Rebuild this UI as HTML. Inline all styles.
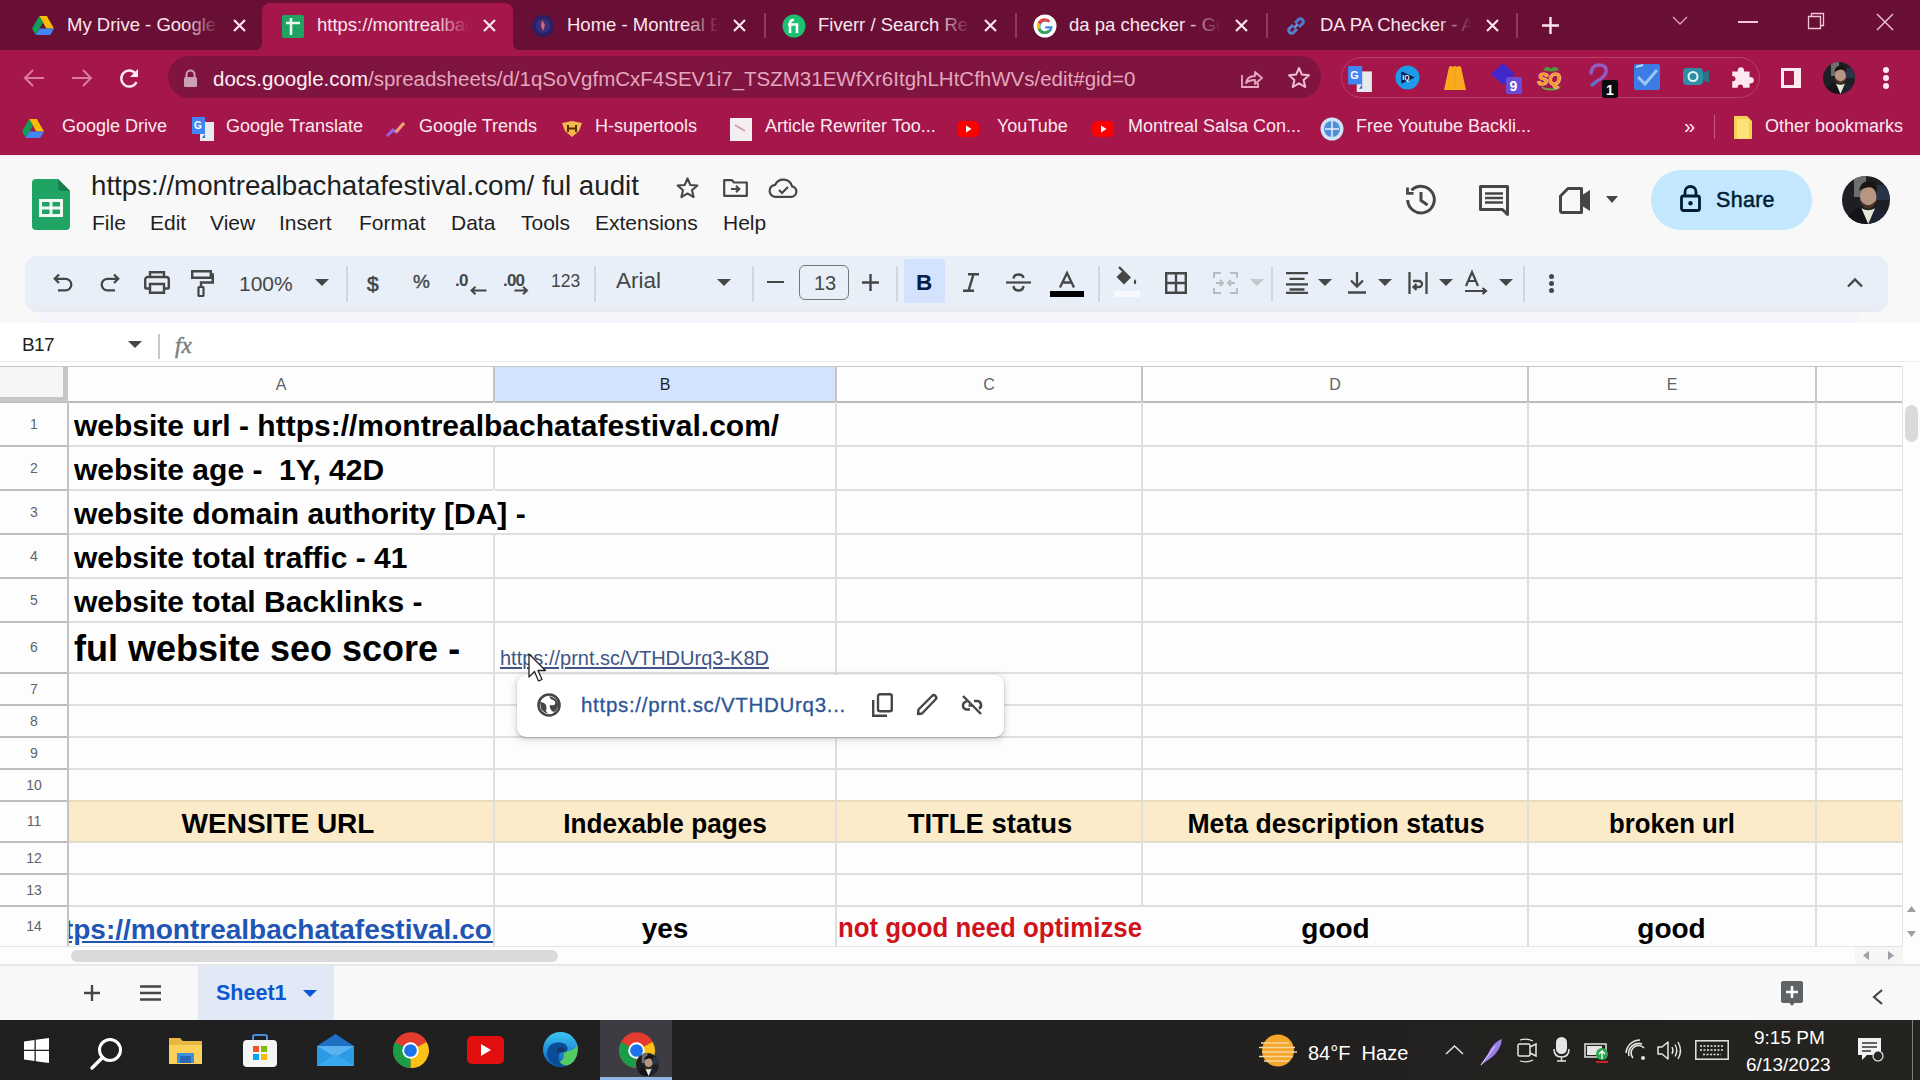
<!DOCTYPE html>
<html><head><meta charset="utf-8"><style>
*{margin:0;padding:0;box-sizing:border-box}
html,body{width:1920px;height:1080px;overflow:hidden;background:#fff;font-family:"Liberation Sans",sans-serif}
.a{position:absolute}
svg.i{position:absolute;overflow:visible}
.t{position:absolute;white-space:nowrap;line-height:1}
</style></head><body>
<div class="a" style="left:0;top:0;width:1920px;height:50px;background:#690e34"></div>
<div class="a" style="left:0;top:50px;width:1920px;height:105px;background:#a5164b"></div>
<svg class="i" style="left:252px;top:0" width="272" height="52"><path d="M0 51 Q10 51 10 42 L10 12 Q10 3 19 3 L252 3 Q261 3 261 12 L261 42 Q261 51 271 51 Z" fill="#a5164b"/></svg>
<div class="a" style="left:764px;top:13px;width:2px;height:25px;background:#8c3a5d"></div>
<div class="a" style="left:1015px;top:13px;width:2px;height:25px;background:#8c3a5d"></div>
<div class="a" style="left:1266px;top:13px;width:2px;height:25px;background:#8c3a5d"></div>
<div class="a" style="left:1516px;top:13px;width:2px;height:25px;background:#8c3a5d"></div>
<svg class="i" style="left:31px;top:14px" width="24" height="24" viewBox="0 0 24 24"><path d="M8.2 2 H15.8 L23 14.5 H15.4 Z" fill="#fbbc04"/><path d="M8.2 2 L1 14.5 L4.8 21 L12 8.5 Z" fill="#0f9d58"/><path d="M4.8 21 H19.2 L23 14.5 H8.6 Z" fill="#4285f4"/></svg>
<div class="a" style="left:67px;top:10px;width:158px;height:30px;overflow:hidden">
<div class="t" style="left:0;top:6.3px;font-size:18.5px;color:#fbe6ee">My Drive - Google Drive</div>
<div class="a" style="right:0;top:0;width:40px;height:30px;background:linear-gradient(to right,rgba(0,0,0,0),#690e34 85%)"></div>
</div>
<svg class="i" style="left:233px;top:19px" width="13" height="13"><path d="M1 1 L12 12 M12 1 L1 12" stroke="#fbe6ee" stroke-width="2.2"/></svg>
<svg class="i" style="left:281px;top:14px" width="24" height="24" viewBox="0 0 24 24"><rect x="1" y="1" width="22" height="23" rx="2" fill="#1ea362"/><path d="M5 9 H19 M10 4 V21" stroke="#e8f5ec" stroke-width="2.6"/></svg>
<div class="a" style="left:317px;top:10px;width:158px;height:30px;overflow:hidden">
<div class="t" style="left:0;top:6.3px;font-size:18.5px;color:#fbe6ee">https://montrealbachatafestival.com</div>
<div class="a" style="right:0;top:0;width:40px;height:30px;background:linear-gradient(to right,rgba(0,0,0,0),#a5164b 85%)"></div>
</div>
<svg class="i" style="left:483px;top:19px" width="13" height="13"><path d="M1 1 L12 12 M12 1 L1 12" stroke="#fbe6ee" stroke-width="2.2"/></svg>
<svg class="i" style="left:531px;top:14px" width="24" height="24" viewBox="0 0 24 24"><circle cx="12" cy="12" r="11" fill="#2c1f63"/><circle cx="12" cy="12" r="7" fill="#3a2f78"/><path d="M11 6 L14 11 L12 17 L10 12 Z" fill="#d46a7a"/></svg>
<div class="a" style="left:567px;top:10px;width:158px;height:30px;overflow:hidden">
<div class="t" style="left:0;top:6.3px;font-size:18.5px;color:#fbe6ee">Home - Montreal Bachata</div>
<div class="a" style="right:0;top:0;width:40px;height:30px;background:linear-gradient(to right,rgba(0,0,0,0),#690e34 85%)"></div>
</div>
<svg class="i" style="left:733px;top:19px" width="13" height="13"><path d="M1 1 L12 12 M12 1 L1 12" stroke="#fbe6ee" stroke-width="2.2"/></svg>
<svg class="i" style="left:782px;top:14px" width="24" height="24" viewBox="0 0 24 24"><circle cx="12" cy="12" r="11.5" fill="#1dbf73"/><path d="M8 19 V10 M6 10.5 H15 V19 M8 10 Q8 5.5 12 6" stroke="#fff" stroke-width="2.6" fill="none"/></svg>
<div class="a" style="left:818px;top:10px;width:158px;height:30px;overflow:hidden">
<div class="t" style="left:0;top:6.3px;font-size:18.5px;color:#fbe6ee">Fiverr / Search Results</div>
<div class="a" style="right:0;top:0;width:40px;height:30px;background:linear-gradient(to right,rgba(0,0,0,0),#690e34 85%)"></div>
</div>
<svg class="i" style="left:984px;top:19px" width="13" height="13"><path d="M1 1 L12 12 M12 1 L1 12" stroke="#fbe6ee" stroke-width="2.2"/></svg>
<svg class="i" style="left:1033px;top:14px" width="24" height="24" viewBox="0 0 24 24"><circle cx="12" cy="12" r="11.5" fill="#fff"/><path d="M19.6 12.2 H12.2 V14.6 H16.9 A5 5 0 1 1 15.3 8.6 L17.1 6.8 A7.6 7.6 0 1 0 19.6 12.2 Z" fill="#4285f4"/><path d="M4.6 8.5 A7.6 7.6 0 0 1 17.1 6.8 L15.3 8.6 A5 5 0 0 0 7.2 9.9 Z" fill="#ea4335"/><path d="M4.6 8.5 L7.2 9.9 A5 5 0 0 0 7.3 14.3 L4.7 15.7 A7.6 7.6 0 0 1 4.6 8.5 Z" fill="#fbbc05"/><path d="M4.7 15.7 L7.3 14.3 A5 5 0 0 0 15.5 15.6 L17.5 17.3 A7.6 7.6 0 0 1 4.7 15.7 Z" fill="#34a853"/></svg>
<div class="a" style="left:1069px;top:10px;width:158px;height:30px;overflow:hidden">
<div class="t" style="left:0;top:6.3px;font-size:18.5px;color:#fbe6ee">da pa checker - Google</div>
<div class="a" style="right:0;top:0;width:40px;height:30px;background:linear-gradient(to right,rgba(0,0,0,0),#690e34 85%)"></div>
</div>
<svg class="i" style="left:1235px;top:19px" width="13" height="13"><path d="M1 1 L12 12 M12 1 L1 12" stroke="#fbe6ee" stroke-width="2.2"/></svg>
<svg class="i" style="left:1284px;top:14px" width="24" height="24" viewBox="0 0 24 24"><path d="M10 14 L14 10" stroke="#6a8fd6" stroke-width="2.5"/><path d="M9 11 L5 15 A3 3 0 0 0 9 19 L13 15" stroke="#5b7fd0" stroke-width="3" fill="none"/><path d="M11 9 L15 5 A3 3 0 0 1 19 9 L15 13" stroke="#4f79cf" stroke-width="3" fill="none"/></svg>
<div class="a" style="left:1320px;top:10px;width:158px;height:30px;overflow:hidden">
<div class="t" style="left:0;top:6.3px;font-size:18.5px;color:#fbe6ee">DA PA Checker - All</div>
<div class="a" style="right:0;top:0;width:40px;height:30px;background:linear-gradient(to right,rgba(0,0,0,0),#690e34 85%)"></div>
</div>
<svg class="i" style="left:1486px;top:19px" width="13" height="13"><path d="M1 1 L12 12 M12 1 L1 12" stroke="#fbe6ee" stroke-width="2.2"/></svg>
<svg class="i" style="left:1541px;top:16px" width="19" height="19"><path d="M9.5 1 V18 M1 9.5 H18" stroke="#fbe6ee" stroke-width="2.4"/></svg>
<svg class="i" style="left:1672px;top:16px" width="16" height="10"><path d="M1 1 L8 8 L15 1" stroke="#e9a0bd" stroke-width="1.3" fill="none"/></svg>
<div class="a" style="left:1738px;top:21px;width:20px;height:1.5px;background:#f2c6d6"></div>
<svg class="i" style="left:1808px;top:13px" width="16" height="16"><path d="M0.5 3.5 H12.5 V15.5 H0.5 Z M3.5 3.5 V0.5 H15.5 V12.5 H12.5" stroke="#f2c6d6" stroke-width="1.3" fill="none"/></svg>
<svg class="i" style="left:1876px;top:13px" width="18" height="18"><path d="M1 1 L17 17 M17 1 L1 17" stroke="#f2c6d6" stroke-width="1.4"/></svg>
<svg class="i" style="left:23px;top:68px" width="22" height="20"><path d="M21 10 H3 M10 2 L2 10 L10 18" stroke="#dc7ba0" stroke-width="2" fill="none"/></svg>
<svg class="i" style="left:71px;top:68px" width="22" height="20"><path d="M1 10 H19 M12 2 L20 10 L12 18" stroke="#dc7ba0" stroke-width="2" fill="none"/></svg>
<svg class="i" style="left:118px;top:67px" width="24" height="24"><path d="M18.5 15 A8 8 0 1 1 17.5 6.5" stroke="#fde9f0" stroke-width="2.4" fill="none"/><path d="M20 2 V10 H12 Z" fill="#fde9f0"/></svg>
<div class="a" style="left:168px;top:56px;width:1153px;height:42px;border-radius:21px;background:#7f1440"></div>
<svg class="i" style="left:183px;top:69px" width="15" height="18"><path d="M3.5 8 V5.5 A4 4 0 0 1 11.5 5.5 V8" stroke="#caa0b2" stroke-width="2" fill="none"/><rect x="1" y="8" width="13" height="10" rx="1.5" fill="#caa0b2"/></svg>
<div class="t" style="left:213px;top:68.6px;font-size:20.5px;color:#fdeef3">docs.google.com<span style="color:#e3a7bd">/spreadsheets/d/1qSoVgfmCxF4SEV1i7_TSZM31EWfXr6ItghLHtCfhWVs/edit#gid=0</span></div>
<svg class="i" style="left:1240px;top:67px" width="24" height="22"><path d="M2 8 V20 H18 V16" stroke="#e9a6c0" stroke-width="1.8" fill="none"/><path d="M6 16 Q7 9 15 9 V5 L22 11 L15 17 V13 Q9 13 6 16 Z" stroke="#e9a6c0" stroke-width="1.8" fill="none" stroke-linejoin="round"/></svg>
<svg class="i" style="left:1287px;top:66px" width="24" height="24"><path d="M12 2 L14.9 8.6 L22 9.3 L16.6 14 L18.2 21 L12 17.3 L5.8 21 L7.4 14 L2 9.3 L9.1 8.6 Z" stroke="#f0c0d2" stroke-width="2" fill="none" stroke-linejoin="round"/></svg>
<div class="a" style="left:1341px;top:57px;width:419px;height:41px;border-radius:21px;border:1.5px solid #b8406a"></div>
<svg class="i" style="left:1347px;top:66px" width="26" height="26" viewBox="0 0 24 24"><rect x="9" y="5" width="14" height="19" fill="#e8eaed"/><rect x="1" y="0" width="13" height="17" fill="#4285f4"/><text x="3" y="12" font-size="10" font-weight="bold" fill="#fff" font-family="Liberation Sans">G</text><path d="M14 17 L11 21 H14 Z" fill="#3367d6"/></svg>
<svg class="i" style="left:1395px;top:65px" width="25" height="25" viewBox="0 0 24 24"><circle cx="12" cy="12" r="11.5" fill="#1e9be8"/><path d="M6 6 L19 12 L6 18 Z" fill="#0b1f4d"/><text x="7" y="14.5" font-size="6.5" font-weight="bold" fill="#fff" font-family="Liberation Sans">IQ</text></svg>
<svg class="i" style="left:1443px;top:64px" width="24" height="27" viewBox="0 0 24 27"><path d="M6 3 Q8 1 10 3 Q12 1 14 3 Q16 1 18 3 L23 26 H1 Z" fill="#fbaa1f"/><path d="M12 3 V26" stroke="#f59e0b" stroke-width="1"/></svg>
<svg class="i" style="left:1489px;top:62px" width="36" height="34" viewBox="0 0 36 34"><path d="M14 1 L26 12 L14 23 L2 12 Z" fill="#4127c9"/><rect x="17" y="15" width="16" height="17" rx="2" fill="#6a4cd8"/><text x="20.5" y="29" font-size="14" font-weight="bold" fill="#fff" font-family="Liberation Sans">9</text></svg>
<svg class="i" style="left:1535px;top:64px" width="32" height="28" viewBox="0 0 32 28"><path d="M8 6 Q12 0 16 5 Q20 0 24 6 Q16 9 8 6 Z" fill="#4e9a3a"/><path d="M6 22 Q16 27 26 22 L24 25 Q16 28 8 25 Z" fill="#6aa640"/><text x="2.5" y="21" font-size="16" font-weight="bold" font-style="italic" fill="#f39a1e" stroke="#fbd9b0" stroke-width="1.1" paint-order="stroke" font-family="Liberation Sans">SQ</text></svg>
<svg class="i" style="left:1585px;top:62px" width="40" height="38" viewBox="0 0 40 38"><path d="M6 11 Q7 3 14 3 Q22 3 21 10 Q20 15 12 19" stroke="#8f5fc5" stroke-width="3.5" fill="none" stroke-linecap="round"/><path d="M12 19 L6 24" stroke="#5b74cc" stroke-width="3.5"/><rect x="17" y="18" width="16" height="18" rx="2" fill="#0c0c0c"/><text x="21" y="33" font-size="14" font-weight="bold" fill="#fff" font-family="Liberation Sans">1</text></svg>
<svg class="i" style="left:1633px;top:63px" width="28" height="28" viewBox="0 0 28 28"><rect x="1" y="1" width="26" height="26" rx="2" fill="#3c7be3"/><path d="M5 14 L12 21 L24 7" stroke="#9cc7f7" stroke-width="3" fill="none"/><path d="M3 4 L10 2" stroke="#b7d6ff" stroke-width="2"/></svg>
<svg class="i" style="left:1682px;top:65px" width="28" height="24" viewBox="0 0 28 24"><rect x="1" y="3" width="20" height="17" rx="4" fill="#2d8fa5"/><circle cx="11" cy="11.5" r="4.5" fill="none" stroke="#e6f5f8" stroke-width="2"/><path d="M21 8 L27 5 V18 L21 15 Z" fill="#2a7388"/></svg>
<svg class="i" style="left:1729px;top:64px" width="26" height="26" viewBox="0 0 24 24"><path d="M3 7 H8 Q8 3 11 3 Q14 3 14 7 H19 V12 Q23 12 23 15 Q23 18 19 18 V22 H13 Q13 19 10.5 19 Q8 19 8 22 H3 V16 Q6 16 6 13.5 Q6 11 3 11 Z" fill="#fde9f0"/></svg>
<svg class="i" style="left:1779px;top:66px" width="24" height="24"><rect x="2" y="2" width="20" height="20" fill="#fde9f0"/><rect x="5" y="5" width="10" height="14" fill="#a5164b"/></svg>
<svg class="i" style="left:1823px;top:62px" width="32" height="32" viewBox="0 0 32 32"><defs><clipPath id="avc1823"><circle cx="16" cy="16" r="16"/></clipPath></defs><g clip-path="url(#avc1823)"><rect width="32" height="32" fill="#1e1f22"/><rect x="8" y="0" width="8" height="14" fill="#6b6f70"/><rect x="23" y="6" width="9" height="10" fill="#2a3448"/><ellipse cx="17.5" cy="14" rx="5.5" ry="7" fill="#b89580"/><path d="M11.5 10 Q12 3.5 18 3.5 Q24 4 23.5 10 Q21 7 17.5 7.5 Q14 8 11.5 10 Z" fill="#1a1512"/><path d="M12.5 16 Q13 21 17.5 22 Q22 21 22.5 16 Q21 19 17.5 19.5 Q14 19 12.5 16 Z" fill="#4a3026"/><path d="M2 32 Q5 22 12 21 L17.5 32 Z" fill="#141418"/><path d="M33 32 Q30 22 23 21 L17.5 32 Z" fill="#1d2235"/><path d="M13 21.5 L17.5 32 L22 21.5 Q17.5 24 13 21.5 Z" fill="#e8e6d6"/></g></svg>
<div class="a" style="left:1883px;top:67px;width:6px;height:6px;border-radius:3px;background:#fde9f0"></div>
<div class="a" style="left:1883px;top:75px;width:6px;height:6px;border-radius:3px;background:#fde9f0"></div>
<div class="a" style="left:1883px;top:83px;width:6px;height:6px;border-radius:3px;background:#fde9f0"></div>
<svg class="i" style="left:21px;top:117px" width="24" height="24" viewBox="0 0 24 24"><path d="M8.2 2 H15.8 L23 14.5 H15.4 Z" fill="#fbbc04"/><path d="M8.2 2 L1 14.5 L4.8 21 L12 8.5 Z" fill="#0f9d58"/><path d="M4.8 21 H19.2 L23 14.5 H8.6 Z" fill="#4285f4"/></svg>
<div class="t" style="left:62px;top:116.8px;font-size:18px;color:#fbe8ef">Google Drive</div>
<svg class="i" style="left:191px;top:117px" width="24" height="24" viewBox="0 0 24 24"><rect x="9" y="5" width="14" height="19" fill="#e8eaed"/><rect x="1" y="0" width="13" height="17" fill="#4285f4"/><text x="3" y="12" font-size="10" font-weight="bold" fill="#fff" font-family="Liberation Sans">G</text><path d="M14 17 L11 21 H14 Z" fill="#3367d6"/></svg>
<div class="t" style="left:226px;top:116.8px;font-size:18px;color:#fbe8ef">Google Translate</div>
<svg class="i" style="left:384px;top:117px" width="24" height="24" viewBox="0 0 24 24"><path d="M3 19 L9 13 L12 15 L20 6" stroke="#9b5de5" stroke-width="3" fill="none"/><path d="M12 15 L20 6" stroke="#f4a261" stroke-width="3"/></svg>
<div class="t" style="left:419px;top:116.8px;font-size:18px;color:#fbe8ef">Google Trends</div>
<svg class="i" style="left:560px;top:117px" width="24" height="24" viewBox="0 0 24 24"><path d="M2 6 L12 4 L22 6 L19 14 L12 20 L5 14 Z" fill="#f2b84b"/><path d="M8 8 V15 M16 8 V15 M8 11.5 H16" stroke="#5a2a00" stroke-width="2"/></svg>
<div class="t" style="left:595px;top:116.8px;font-size:18px;color:#fbe8ef">H-supertools</div>
<svg class="i" style="left:729px;top:117px" width="24" height="24" viewBox="0 0 24 24"><rect x="1" y="1" width="22" height="23" fill="#f3eef0"/><path d="M6 8 L16 14" stroke="#c9a0aa" stroke-width="2"/></svg>
<div class="t" style="left:765px;top:116.8px;font-size:18px;color:#fbe8ef">Article Rewriter Too...</div>
<svg class="i" style="left:956px;top:117px" width="24" height="24" viewBox="0 0 24 24"><rect x="1" y="4" width="22" height="16" rx="5" fill="#f00"/><path d="M10 8.5 L15.5 12 L10 15.5 Z" fill="#fff"/></svg>
<div class="t" style="left:997px;top:116.8px;font-size:18px;color:#fbe8ef">YouTube</div>
<svg class="i" style="left:1091px;top:117px" width="24" height="24" viewBox="0 0 24 24"><rect x="1" y="4" width="22" height="16" rx="5" fill="#f00"/><path d="M10 8.5 L15.5 12 L10 15.5 Z" fill="#fff"/></svg>
<div class="t" style="left:1128px;top:116.8px;font-size:18px;color:#fbe8ef">Montreal Salsa Con...</div>
<svg class="i" style="left:1320px;top:117px" width="24" height="24" viewBox="0 0 24 24"><circle cx="12" cy="12" r="11.5" fill="#cfe3f7"/><circle cx="12" cy="12" r="8" fill="#4f8ed8"/><path d="M5 12 H19 M12 4 V20" stroke="#e6f0fb" stroke-width="1.5"/></svg>
<div class="t" style="left:1356px;top:116.8px;font-size:18px;color:#fbe8ef">Free Youtube Backli...</div>
<div class="t" style="left:1684px;top:116.1px;font-size:20px;color:#fbe8ef">&raquo;</div>
<div class="a" style="left:1714px;top:115px;width:1px;height:24px;background:#c8557f"></div>
<svg class="i" style="left:1732px;top:115px" width="22" height="25"><path d="M2 1 H15 L20 6 V24 H2 Z" fill="#f6cf55"/><path d="M5 4 H17 V24 H5 Z" fill="#fde27a"/></svg>
<div class="t" style="left:1765px;top:116.8px;font-size:18px;color:#fbe8ef">Other bookmarks</div>
<div class="a" style="left:0;top:155px;width:1920px;height:168px;background:#f8f8f9"></div>
<div class="a" style="left:0;top:155px;width:1920px;height:3px;background:#fbeef4"></div>
<div class="a" style="left:0;top:323px;width:1920px;height:43px;background:#fff"></div>
<svg class="i" style="left:32px;top:179px" width="38" height="51" viewBox="0 0 38 51"><path d="M4 0 H26 L38 12 V47 A4 4 0 0 1 34 51 H4 A4 4 0 0 1 0 47 V4 A4 4 0 0 1 4 0 Z" fill="#1fa463"/><path d="M26 0 L38 12 H30 A4 4 0 0 1 26 8 Z" fill="#167f4c"/><rect x="7" y="20" width="24" height="18" fill="#f1f8f4"/><rect x="10" y="23" width="7.5" height="4.5" fill="#1fa463"/><rect x="20.5" y="23" width="7.5" height="4.5" fill="#1fa463"/><rect x="10" y="30.5" width="7.5" height="4.5" fill="#1fa463"/><rect x="20.5" y="30.5" width="7.5" height="4.5" fill="#1fa463"/></svg>
<div class="t" style="left:91px;top:171.6px;font-size:27.7px;color:#1f1f1f">https://montrealbachatafestival.com/ ful audit</div>
<svg class="i" style="left:676px;top:177px" width="23" height="22" viewBox="0 0 24 23"><path d="M12 1.5 L14.9 8.3 L22.3 8.9 L16.7 13.8 L18.4 21 L12 17.2 L5.6 21 L7.3 13.8 L1.7 8.9 L9.1 8.3 Z" stroke="#444746" stroke-width="2.2" fill="none" stroke-linejoin="round"/></svg>
<svg class="i" style="left:723px;top:179px" width="25" height="18" viewBox="0 0 25 18"><path d="M1.2 1.2 H9 L11 3.5 H23.8 V16.8 H1.2 Z" stroke="#444746" stroke-width="2.2" fill="none" stroke-linejoin="round"/><path d="M8 10 H16 M13 6.8 L16.3 10 L13 13.2" stroke="#444746" stroke-width="2" fill="none"/></svg>
<svg class="i" style="left:769px;top:178px" width="29" height="20" viewBox="0 0 29 20"><path d="M7 18.8 H22.5 A5.3 5.3 0 0 0 23 8.3 A9 9 0 0 0 6.2 6.8 A6 6 0 0 0 7 18.8 Z" stroke="#444746" stroke-width="2.2" fill="none"/><path d="M10 12 L13 15 L19 9" stroke="#444746" stroke-width="2.2" fill="none"/></svg>
<div class="t" style="left:92px;top:212.2px;font-size:21px;color:#1f1f1f">File</div>
<div class="t" style="left:150px;top:212.2px;font-size:21px;color:#1f1f1f">Edit</div>
<div class="t" style="left:210px;top:212.2px;font-size:21px;color:#1f1f1f">View</div>
<div class="t" style="left:279px;top:212.2px;font-size:21px;color:#1f1f1f">Insert</div>
<div class="t" style="left:359px;top:212.2px;font-size:21px;color:#1f1f1f">Format</div>
<div class="t" style="left:451px;top:212.2px;font-size:21px;color:#1f1f1f">Data</div>
<div class="t" style="left:521px;top:212.2px;font-size:21px;color:#1f1f1f">Tools</div>
<div class="t" style="left:595px;top:212.2px;font-size:21px;color:#1f1f1f">Extensions</div>
<div class="t" style="left:723px;top:212.2px;font-size:21px;color:#1f1f1f">Help</div>
<svg class="i" style="left:1405px;top:184px" width="32" height="32" viewBox="0 0 32 32"><path d="M6.5 6.3 A13.3 13.3 0 1 1 2.7 16" stroke="#444746" stroke-width="3" fill="none"/><path d="M2.5 3.5 V9.3 H8.5" stroke="#444746" stroke-width="2.8" fill="none"/><path d="M16 8 V16.5 L22.5 21" stroke="#444746" stroke-width="3" fill="none"/></svg>
<svg class="i" style="left:1479px;top:185px" width="31" height="31" viewBox="0 0 31 31"><path d="M1.5 1.5 H28.5 V29.5 L23.5 24.5 H1.5 Z" stroke="#444746" stroke-width="3" fill="none" stroke-linejoin="round"/><path d="M6 8.5 H24 M6 13 H24 M6 17.5 H24" stroke="#444746" stroke-width="2.6"/></svg>
<svg class="i" style="left:1559px;top:187px" width="33" height="27" viewBox="0 0 33 27"><path d="M9 1.5 H22.5 V25.5 H3.5 A2 2 0 0 1 1.5 23.5 V9 Z" stroke="#444746" stroke-width="3" fill="none" stroke-linejoin="round"/><path d="M22.5 8.5 L31 3 V24 L22.5 18.5 Z" fill="#444746"/></svg>
<svg class="i" style="left:1606px;top:196px" width="12" height="7"><path d="M0 0 H12 L6 7 Z" fill="#444746"/></svg>
<div class="a" style="left:1651px;top:170px;width:161px;height:60px;border-radius:30px;background:#c2e7ff"></div>
<svg class="i" style="left:1680px;top:185px" width="21" height="27" viewBox="0 0 21 27"><path d="M5 11 V7 A5.5 5.5 0 0 1 16 7 V11" stroke="#001d35" stroke-width="2.8" fill="none"/><rect x="1.5" y="11" width="18" height="14.5" rx="2" stroke="#001d35" stroke-width="2.8" fill="none"/><circle cx="10.5" cy="18.3" r="2.2" fill="#001d35"/></svg>
<div class="t" style="left:1716px;top:189.7px;font-size:21.5px;color:#001d35;-webkit-text-stroke:0.5px #001d35;letter-spacing:0.3px">Share</div>
<svg class="i" style="left:1842px;top:176px" width="48" height="48" viewBox="0 0 32 32"><defs><clipPath id="avc1842"><circle cx="16" cy="16" r="16"/></clipPath></defs><g clip-path="url(#avc1842)"><rect width="32" height="32" fill="#1e1f22"/><rect x="8" y="0" width="8" height="14" fill="#6b6f70"/><rect x="23" y="6" width="9" height="10" fill="#2a3448"/><ellipse cx="17.5" cy="14" rx="5.5" ry="7" fill="#b89580"/><path d="M11.5 10 Q12 3.5 18 3.5 Q24 4 23.5 10 Q21 7 17.5 7.5 Q14 8 11.5 10 Z" fill="#1a1512"/><path d="M12.5 16 Q13 21 17.5 22 Q22 21 22.5 16 Q21 19 17.5 19.5 Q14 19 12.5 16 Z" fill="#4a3026"/><path d="M2 32 Q5 22 12 21 L17.5 32 Z" fill="#141418"/><path d="M33 32 Q30 22 23 21 L17.5 32 Z" fill="#1d2235"/><path d="M13 21.5 L17.5 32 L22 21.5 Q17.5 24 13 21.5 Z" fill="#e8e6d6"/></g></svg>
<div class="a" style="left:25px;top:256px;width:1863px;height:56px;border-radius:12px;background:linear-gradient(to bottom,#e9eff8 0,#e9eff8 84%,#ebe9f4 100%)"></div>
<div class="a" style="left:40px;top:312px;width:1820px;height:11px;background:#f6f5fb"></div>
<svg class="i" style="left:53px;top:273px" width="20" height="19" viewBox="0 0 20 19"><path d="M6 1.5 L1.8 5.8 L6 10 M2 5.8 H12.5 A5.8 5.8 0 0 1 12.5 17.4 H5" stroke="#444746" stroke-width="2.3" fill="none"/></svg>
<svg class="i" style="left:100px;top:273px" width="20" height="19" viewBox="0 0 20 19"><path d="M14 1.5 L18.2 5.8 L14 10 M18 5.8 H7.5 A5.8 5.8 0 0 0 7.5 17.4 H15" stroke="#444746" stroke-width="2.3" fill="none"/></svg>
<svg class="i" style="left:144px;top:271px" width="26" height="23" viewBox="0 0 26 23"><path d="M6 6 V1.2 H20 V6" stroke="#444746" stroke-width="2.4" fill="none"/><path d="M6 17.5 H2 A1 1 0 0 1 1.2 16.5 V8.5 A2.5 2.5 0 0 1 3.7 6 H22.3 A2.5 2.5 0 0 1 24.8 8.5 V16.5 A1 1 0 0 1 24 17.5 H20" stroke="#444746" stroke-width="2.4" fill="none"/><path d="M6 13 H20 V21.8 H6 Z" stroke="#444746" stroke-width="2.4" fill="none"/></svg>
<svg class="i" style="left:191px;top:270px" width="23" height="27" viewBox="0 0 23 27"><path d="M1.2 1.2 H19.8 V7.8 H1.2 Z M19.8 4.5 H21.8 V12.5 H10 V17" stroke="#444746" stroke-width="2.4" fill="none"/><rect x="7.5" y="17" width="5" height="9" rx="0.5" stroke="#444746" stroke-width="2.2" fill="none"/></svg>
<div class="t" style="left:239px;top:273.2px;font-size:21px;color:#444746">100%</div>
<svg class="i" style="left:315px;top:279px" width="14" height="7"><path d="M0 0 H14 L7 7 Z" fill="#444746"/></svg>
<div class="a" style="left:346px;top:266px;width:1.5px;height:36px;background:#d3d5d9"></div>
<div class="a" style="left:594px;top:266px;width:1.5px;height:36px;background:#d3d5d9"></div>
<div class="a" style="left:752px;top:266px;width:1.5px;height:36px;background:#d3d5d9"></div>
<div class="a" style="left:896px;top:266px;width:1.5px;height:36px;background:#d3d5d9"></div>
<div class="a" style="left:1098px;top:266px;width:1.5px;height:36px;background:#d3d5d9"></div>
<div class="a" style="left:1271px;top:266px;width:1.5px;height:36px;background:#d3d5d9"></div>
<div class="a" style="left:1523px;top:266px;width:1.5px;height:36px;background:#d3d5d9"></div>
<div class="t" style="left:367px;top:273.2px;font-size:21px;color:#444746;-webkit-text-stroke:0.6px #444746">$</div>
<div class="t" style="left:413px;top:271.9px;font-size:19px;color:#444746;-webkit-text-stroke:0.4px #444746">%</div>
<div class="t" style="left:455px;top:271.6px;font-size:17px;color:#444746;font-weight:bold;letter-spacing:-0.8px">.0</div>
<svg class="i" style="left:469px;top:286px" width="18" height="9"><path d="M17.5 4.5 H2.5 M6.5 0.8 L2.5 4.5 L6.5 8.2" stroke="#444746" stroke-width="2" fill="none"/></svg>
<div class="t" style="left:503px;top:271.6px;font-size:17px;color:#444746;font-weight:bold;letter-spacing:-0.8px">.00</div>
<svg class="i" style="left:514px;top:286px" width="15" height="9"><path d="M0.5 4.5 H13 M9 0.8 L13 4.5 L9 8.2" stroke="#444746" stroke-width="2" fill="none"/></svg>
<div class="t" style="left:551px;top:273.2px;font-size:17.5px;color:#444746">123</div>
<div class="t" style="left:616px;top:270.0px;font-size:22.5px;color:#444746">Arial</div>
<svg class="i" style="left:717px;top:279px" width="14" height="7"><path d="M0 0 H14 L7 7 Z" fill="#444746"/></svg>
<div class="a" style="left:767px;top:281px;width:17px;height:2.4px;background:#444746"></div>
<div class="a" style="left:799px;top:265px;width:50px;height:35px;border-radius:6px;border:1.6px solid #747775"></div>
<div class="t" style="left:814px;top:272.6px;font-size:20px;color:#444746">13</div>
<svg class="i" style="left:862px;top:274px" width="17" height="17"><path d="M8.5 0 V17 M0 8.5 H17" stroke="#444746" stroke-width="2.4"/></svg>
<div class="a" style="left:904px;top:259px;width:41px;height:44px;border-radius:2px;background:#d3e3fd"></div>
<div class="t" style="left:916px;top:271.5px;font-size:22.5px;color:#041e49;font-weight:bold">B</div>
<svg class="i" style="left:962px;top:273px" width="18" height="19"><path d="M6 1.2 H17 M1 17.8 H12 M11.5 1.2 L6.5 17.8" stroke="#444746" stroke-width="2.4" fill="none"/></svg>
<svg class="i" style="left:1005px;top:273px" width="27" height="19"><path d="M1 9.5 H26" stroke="#444746" stroke-width="2.2"/><path d="M8.5 5.5 Q9 1.5 13.5 1.5 Q18 1.5 18.5 5" stroke="#444746" stroke-width="2.4" fill="none"/><path d="M8.5 13 Q9 17.5 13.5 17.5 Q18 17.5 18.5 13" stroke="#444746" stroke-width="2.4" fill="none"/></svg>
<svg class="i" style="left:1059px;top:272px" width="16" height="16"><path d="M1 15.5 L8 1 L15 15.5 M3.5 10.5 H12.5" stroke="#444746" stroke-width="2.3" fill="none"/></svg>
<div class="a" style="left:1050px;top:291px;width:34px;height:6px;background:#000"></div>
<svg class="i" style="left:1114px;top:266px" width="24" height="22" viewBox="0 0 24 22"><path d="M5 1 L9 5" stroke="#444746" stroke-width="2.4"/><path d="M9.5 4 L17 11.5 L10 18.5 L2.5 11 Z" fill="#444746"/><path d="M21 13 Q23.5 16.5 21 18.5 Q18.5 16.5 21 13 Z" fill="#444746"/></svg>
<div class="a" style="left:1114px;top:291px;width:26px;height:6px;background:#f7f9fc"></div>
<svg class="i" style="left:1165px;top:272px" width="22" height="22"><path d="M1.2 1.2 H20.8 V20.8 H1.2 Z M11 1 V21 M1 11 H21" stroke="#444746" stroke-width="2.4" fill="none"/></svg>
<svg class="i" style="left:1213px;top:272px" width="25" height="22"><path d="M1 6 V1 H8 M17 1 H24 V6 M1 16 V21 H8 M17 21 H24 V16" stroke="#b8bcc2" stroke-width="2" fill="none"/><path d="M3 11 H10 M7 8 L10 11 L7 14 M22 11 H15 M18 8 L15 11 L18 14" stroke="#b8bcc2" stroke-width="2" fill="none"/></svg>
<svg class="i" style="left:1250px;top:279px" width="14" height="7"><path d="M0 0 H14 L7 7 Z" fill="#c4c7cc"/></svg>
<svg class="i" style="left:1286px;top:272px" width="22" height="22"><path d="M0 1.2 H22 M3.5 6.8 H18.5 M0 12.4 H22 M3.5 17.5 H18.5 M0 20.8 H22" stroke="#444746" stroke-width="2.3"/></svg>
<svg class="i" style="left:1318px;top:279px" width="14" height="7"><path d="M0 0 H14 L7 7 Z" fill="#444746"/></svg>
<svg class="i" style="left:1347px;top:271px" width="20" height="23"><path d="M10 1 V15 M4 9.5 L10 15.5 L16 9.5 M1 21.5 H19" stroke="#444746" stroke-width="2.3" fill="none"/></svg>
<svg class="i" style="left:1378px;top:279px" width="14" height="7"><path d="M0 0 H14 L7 7 Z" fill="#444746"/></svg>
<svg class="i" style="left:1408px;top:272px" width="20" height="22"><path d="M1.5 0 V22 M18.5 0 V22 M5 9 H11 A3 3 0 0 1 11 15 H6 M8.5 12 L5.5 15 L8.5 18" stroke="#444746" stroke-width="2.3" fill="none"/></svg>
<svg class="i" style="left:1439px;top:279px" width="14" height="7"><path d="M0 0 H14 L7 7 Z" fill="#444746"/></svg>
<svg class="i" style="left:1464px;top:271px" width="26" height="24"><path d="M2 15 L8 1 L14 15 M4.5 10 H11.5" stroke="#444746" stroke-width="2.2" fill="none"/><path d="M1 20 H22 M18.5 17 L22 20 L18.5 23" stroke="#444746" stroke-width="2.2" fill="none"/></svg>
<svg class="i" style="left:1499px;top:279px" width="14" height="7"><path d="M0 0 H14 L7 7 Z" fill="#444746"/></svg>
<div class="a" style="left:1549px;top:274px;width:5px;height:5px;border-radius:3px;background:#444746"></div>
<div class="a" style="left:1549px;top:281px;width:5px;height:5px;border-radius:3px;background:#444746"></div>
<div class="a" style="left:1549px;top:288px;width:5px;height:5px;border-radius:3px;background:#444746"></div>
<svg class="i" style="left:1847px;top:278px" width="16" height="10"><path d="M1 8.5 L8 1.5 L15 8.5" stroke="#444746" stroke-width="2.3" fill="none"/></svg>
<div class="t" style="left:22px;top:334.9px;font-size:19px;color:#1f1f1f;letter-spacing:-0.6px">B17</div>
<svg class="i" style="left:128px;top:341px" width="14" height="7"><path d="M0 0 H14 L7 7 Z" fill="#444746"/></svg>
<div class="a" style="left:158px;top:334px;width:1.5px;height:25px;background:#c7c7c7"></div>
<div class="t" style="left:175px;top:334.4px;font-size:23px;color:#7d7f82;font-family:'Liberation Serif',serif;font-style:italic;-webkit-text-stroke:0.5px #7d7f82">fx</div>
<div class="a" style="left:0;top:361px;width:1920px;height:1px;background:#eeeeee"></div>
<div class="a" style="left:0;top:366px;width:1920px;height:599px;background:#fdfdfd"></div>
<div class="a" style="left:495px;top:367px;width:341px;height:34px;background:#d3e3fd"></div>
<div class="a" style="left:69px;top:802px;width:1834px;height:39px;background:#fcebc8"></div>
<div class="a" style="left:0;top:366px;width:1903px;height:1px;background:#c8c8c8"></div>
<div class="a" style="left:0;top:401px;width:1903px;height:2px;background:#bcbcbc"></div>
<div class="a" style="left:0;top:367px;width:63px;height:30px;background:#f6f6f6"></div>
<div class="a" style="left:63px;top:366px;width:5px;height:36px;background:#c6c6c6"></div>
<div class="a" style="left:0;top:397px;width:68px;height:5px;background:#c6c6c6"></div>
<div class="a" style="left:493px;top:367px;width:2px;height:35px;background:#c4c4c4"></div>
<div class="a" style="left:835px;top:367px;width:2px;height:35px;background:#c4c4c4"></div>
<div class="a" style="left:1141px;top:367px;width:2px;height:35px;background:#c4c4c4"></div>
<div class="a" style="left:1527px;top:367px;width:2px;height:35px;background:#c4c4c4"></div>
<div class="a" style="left:1815px;top:367px;width:2px;height:35px;background:#c4c4c4"></div>
<div class="a" style="left:0;top:445px;width:69px;height:2px;background:#bdbdbd"></div>
<div class="a" style="left:69px;top:445.2px;width:1834px;height:1.5px;background:#dfdfdf"></div>
<div class="a" style="left:0;top:489px;width:69px;height:2px;background:#bdbdbd"></div>
<div class="a" style="left:69px;top:489.2px;width:1834px;height:1.5px;background:#dfdfdf"></div>
<div class="a" style="left:0;top:533px;width:69px;height:2px;background:#bdbdbd"></div>
<div class="a" style="left:69px;top:533.2px;width:1834px;height:1.5px;background:#dfdfdf"></div>
<div class="a" style="left:0;top:577px;width:69px;height:2px;background:#bdbdbd"></div>
<div class="a" style="left:69px;top:577.2px;width:1834px;height:1.5px;background:#dfdfdf"></div>
<div class="a" style="left:0;top:621px;width:69px;height:2px;background:#bdbdbd"></div>
<div class="a" style="left:69px;top:621.2px;width:1834px;height:1.5px;background:#dfdfdf"></div>
<div class="a" style="left:0;top:672px;width:69px;height:2px;background:#bdbdbd"></div>
<div class="a" style="left:69px;top:672.2px;width:1834px;height:1.5px;background:#dfdfdf"></div>
<div class="a" style="left:0;top:704px;width:69px;height:2px;background:#bdbdbd"></div>
<div class="a" style="left:69px;top:704.2px;width:1834px;height:1.5px;background:#dfdfdf"></div>
<div class="a" style="left:0;top:736px;width:69px;height:2px;background:#bdbdbd"></div>
<div class="a" style="left:69px;top:736.2px;width:1834px;height:1.5px;background:#dfdfdf"></div>
<div class="a" style="left:0;top:768px;width:69px;height:2px;background:#bdbdbd"></div>
<div class="a" style="left:69px;top:768.2px;width:1834px;height:1.5px;background:#dfdfdf"></div>
<div class="a" style="left:0;top:800px;width:69px;height:2px;background:#bdbdbd"></div>
<div class="a" style="left:69px;top:800.2px;width:1834px;height:1.5px;background:#dfdfdf"></div>
<div class="a" style="left:0;top:841px;width:69px;height:2px;background:#bdbdbd"></div>
<div class="a" style="left:69px;top:841.2px;width:1834px;height:1.5px;background:#dfdfdf"></div>
<div class="a" style="left:0;top:873px;width:69px;height:2px;background:#bdbdbd"></div>
<div class="a" style="left:69px;top:873.2px;width:1834px;height:1.5px;background:#dfdfdf"></div>
<div class="a" style="left:0;top:905px;width:69px;height:2px;background:#bdbdbd"></div>
<div class="a" style="left:69px;top:905.2px;width:1834px;height:1.5px;background:#dfdfdf"></div>
<div class="a" style="left:69px;top:800px;width:1834px;height:2px;background:#e9dcbd"></div>
<div class="a" style="left:69px;top:841px;width:1834px;height:2px;background:#e2dccb"></div>
<div class="a" style="left:67px;top:402px;width:2px;height:563px;background:#c4c4c4"></div>
<div class="a" style="left:493.2px;top:402px;width:1.5px;height:544px;background:#dfdfdf"></div>
<div class="a" style="left:835.2px;top:402px;width:1.5px;height:544px;background:#dfdfdf"></div>
<div class="a" style="left:1141.2px;top:402px;width:1.5px;height:544px;background:#dfdfdf"></div>
<div class="a" style="left:1527.2px;top:402px;width:1.5px;height:544px;background:#dfdfdf"></div>
<div class="a" style="left:1815.2px;top:402px;width:1.5px;height:544px;background:#dfdfdf"></div>
<div class="a" style="left:1902px;top:366px;width:1.5px;height:599px;background:#e2e2e2"></div>
<div class="a" style="left:1903px;top:366px;width:17px;height:599px;background:#fdfdfd"></div>
<div class="a" style="left:1905px;top:405px;width:13px;height:37px;border-radius:7px;background:#dadada"></div>
<div class="t" style="left:68px;top:377px;width:426px;text-align:center;font-size:16px;color:#5f6368">A</div>
<div class="t" style="left:494px;top:377px;width:342px;text-align:center;font-size:16px;color:#1f1f1f">B</div>
<div class="t" style="left:836px;top:377px;width:306px;text-align:center;font-size:16px;color:#5f6368">C</div>
<div class="t" style="left:1142px;top:377px;width:386px;text-align:center;font-size:16px;color:#5f6368">D</div>
<div class="t" style="left:1528px;top:377px;width:288px;text-align:center;font-size:16px;color:#5f6368">E</div>
<div class="t" style="left:0;top:417px;width:68px;text-align:center;font-size:14px;color:#5f6368">1</div>
<div class="t" style="left:0;top:461px;width:68px;text-align:center;font-size:14px;color:#5f6368">2</div>
<div class="t" style="left:0;top:505px;width:68px;text-align:center;font-size:14px;color:#5f6368">3</div>
<div class="t" style="left:0;top:549px;width:68px;text-align:center;font-size:14px;color:#5f6368">4</div>
<div class="t" style="left:0;top:593px;width:68px;text-align:center;font-size:14px;color:#5f6368">5</div>
<div class="t" style="left:0;top:640px;width:68px;text-align:center;font-size:14px;color:#5f6368">6</div>
<div class="t" style="left:0;top:682px;width:68px;text-align:center;font-size:14px;color:#5f6368">7</div>
<div class="t" style="left:0;top:714px;width:68px;text-align:center;font-size:14px;color:#5f6368">8</div>
<div class="t" style="left:0;top:746px;width:68px;text-align:center;font-size:14px;color:#5f6368">9</div>
<div class="t" style="left:0;top:778px;width:68px;text-align:center;font-size:14px;color:#5f6368">10</div>
<div class="t" style="left:0;top:814px;width:68px;text-align:center;font-size:14px;color:#5f6368">11</div>
<div class="t" style="left:0;top:851px;width:68px;text-align:center;font-size:14px;color:#5f6368">12</div>
<div class="t" style="left:0;top:883px;width:68px;text-align:center;font-size:14px;color:#5f6368">13</div>
<div class="t" style="left:0;top:919px;width:68px;text-align:center;font-size:14px;color:#5f6368">14</div>
<div class="a" style="left:0;top:946px;width:1903px;height:19px;background:#fdfdfd"></div>
<div class="a" style="left:0;top:946px;width:1903px;height:1px;background:#e4e4e4"></div>
<div class="a" style="left:1855px;top:947px;width:48px;height:18px;background:#f6f6f6"></div>
<svg class="i" style="left:1863px;top:951px" width="6" height="9"><path d="M6 0 V9 L0 4.5 Z" fill="#9aa0a6"/></svg>
<svg class="i" style="left:1888px;top:951px" width="6" height="9"><path d="M0 0 V9 L6 4.5 Z" fill="#9aa0a6"/></svg>
<svg class="i" style="left:1907px;top:906px" width="9" height="6"><path d="M0 6 H9 L4.5 0 Z" fill="#9aa0a6"/></svg>
<svg class="i" style="left:1907px;top:931px" width="9" height="6"><path d="M0 0 H9 L4.5 6 Z" fill="#9aa0a6"/></svg>
<div class="a" style="left:71px;top:950px;width:487px;height:12px;border-radius:6px;background:#dadada"></div>
<div class="a" style="left:0;top:964px;width:1920px;height:1px;background:#e6e6e6"></div>
<div class="a" style="left:493px;top:402px;width:2px;height:43px;background:#fdfdfd"></div>
<div class="a" style="left:493px;top:490px;width:2px;height:43px;background:#fdfdfd"></div>
<div class="a" style="left:1141px;top:907px;width:2px;height:39px;background:#fdfdfd"></div>
<div class="t" style="left:74.0px;top:410.6px;font-size:30.0px;font-weight:bold;color:#000;">website url - https://montrealbachatafestival.com/</div>
<div class="t" style="left:74.0px;top:454.6px;font-size:30.0px;font-weight:bold;color:#000;">website age -&nbsp; 1Y, 42D</div>
<div class="t" style="left:74.0px;top:498.6px;font-size:30.0px;font-weight:bold;color:#000;">website domain authority [DA] -</div>
<div class="t" style="left:74.0px;top:542.6px;font-size:30.0px;font-weight:bold;color:#000;">website total traffic - 41</div>
<div class="t" style="left:74.0px;top:586.6px;font-size:30.0px;font-weight:bold;color:#000;">website total Backlinks -</div>
<div class="t" style="left:74.0px;top:630.5px;font-size:36.0px;font-weight:bold;color:#000;">ful website seo score -</div>
<div class="t" style="left:500.0px;top:648.1px;font-size:20.0px;color:#3f5685;text-decoration:underline;text-decoration-thickness:2px;text-underline-offset:2px;">https://prnt.sc/VTHDUrq3-K8D</div>
<div class="t" style="left:278.0px;top:810.3px;width:0;font-size:28.0px;"><span style="position:absolute;left:0;transform:translateX(-50%) scaleX(1.000);transform-origin:center;white-space:nowrap;font-weight:bold;color:#000;">WENSITE URL</span></div>
<div class="t" style="left:665.0px;top:810.3px;width:0;font-size:28.0px;"><span style="position:absolute;left:0;transform:translateX(-50%) scaleX(0.935);transform-origin:center;white-space:nowrap;font-weight:bold;color:#000;">Indexable pages</span></div>
<div class="t" style="left:989.5px;top:810.3px;width:0;font-size:28.0px;"><span style="position:absolute;left:0;transform:translateX(-50%) scaleX(0.980);transform-origin:center;white-space:nowrap;font-weight:bold;color:#000;">TITLE status</span></div>
<div class="t" style="left:1335.5px;top:810.3px;width:0;font-size:28.0px;"><span style="position:absolute;left:0;transform:translateX(-50%) scaleX(0.950);transform-origin:center;white-space:nowrap;font-weight:bold;color:#000;">Meta description status</span></div>
<div class="t" style="left:1671.5px;top:810.3px;width:0;font-size:28.0px;"><span style="position:absolute;left:0;transform:translateX(-50%) scaleX(0.920);transform-origin:center;white-space:nowrap;font-weight:bold;color:#000;">broken url</span></div>
<div class="a" style="left:69px;top:907px;width:424px;height:40px;overflow:hidden">
<div class="t" style="left:212.0px;top:8.8px;width:0;font-size:28.0px;"><span style="position:absolute;left:0;transform:translateX(-50%) scaleX(1.000);transform-origin:center;white-space:nowrap;font-weight:bold;color:#1f55b5;text-decoration:underline;">https://montrealbachatafestival.com/</span></div>
</div>
<div class="t" style="left:665.0px;top:914.8px;width:0;font-size:28.0px;"><span style="position:absolute;left:0;transform:translateX(-50%) scaleX(1.000);transform-origin:center;white-space:nowrap;font-weight:bold;color:#000;">yes</span></div>
<div class="t" style="left:989.5px;top:914.3px;width:0;font-size:28.0px;"><span style="position:absolute;left:0;transform:translateX(-50%) scaleX(0.922);transform-origin:center;white-space:nowrap;font-weight:bold;color:#d0121b;">not good need optimizse</span></div>
<div class="t" style="left:1335.5px;top:914.8px;width:0;font-size:28.0px;"><span style="position:absolute;left:0;transform:translateX(-50%) scaleX(1.000);transform-origin:center;white-space:nowrap;font-weight:bold;color:#000;">good</span></div>
<div class="t" style="left:1671.5px;top:914.8px;width:0;font-size:28.0px;"><span style="position:absolute;left:0;transform:translateX(-50%) scaleX(1.000);transform-origin:center;white-space:nowrap;font-weight:bold;color:#000;">good</span></div>
<div class="a" style="left:517px;top:675px;width:487px;height:62px;border-radius:9px;background:#fff;box-shadow:0 1px 2px rgba(60,64,67,.3),0 2px 6px 2px rgba(60,64,67,.15)"></div>
<svg class="i" style="left:537px;top:693px" width="24" height="24" viewBox="0 0 24 24"><circle cx="12" cy="12" r="10.5" stroke="#444746" stroke-width="2.6" fill="none"/><path d="M3 9 Q7 9 9 12 Q10 15 9 18 L11 21 Q7 20 4 16 Z M12 3 Q13 6 16 7 Q19 8 18 11 Q17 13 14 12 Q12 12 13 15 Q14 18 17 19 Q21 16 21.5 11 Q20 5 12 3 Z" fill="#444746"/></svg>
<div class="t" style="left:581px;top:694.6px;font-size:20.5px;letter-spacing:0.7px;color:#2c5597;-webkit-text-stroke:0.3px #2c5597">https://prnt.sc/VTHDUrq3...</div>
<svg class="i" style="left:872px;top:693px" width="21" height="24" viewBox="0 0 21 24"><rect x="6" y="1.2" width="13.8" height="17" rx="2" stroke="#444746" stroke-width="2.4" fill="none"/><path d="M1.2 7 V22.8 H15" stroke="#444746" stroke-width="2.4" fill="none"/></svg>
<svg class="i" style="left:916px;top:694px" width="22" height="22" viewBox="0 0 22 22"><path d="M2 20 L2.5 15.5 L16 2 A2.1 2.1 0 0 1 19.5 5.5 L6 19.5 Z" stroke="#444746" stroke-width="2.4" fill="none" stroke-linejoin="round"/></svg>
<svg class="i" style="left:961px;top:695px" width="22" height="20" viewBox="0 0 22 20"><path d="M6 6.5 A4 4 0 0 0 6 14.5 H9 M13 6 H16 A4 4 0 0 1 18 13.5" stroke="#444746" stroke-width="2.6" fill="none"/><path d="M7.5 10.5 H11" stroke="#444746" stroke-width="2.4"/><path d="M2 1 L20 19" stroke="#444746" stroke-width="2.4"/></svg>
<svg class="i" style="left:528px;top:653px" width="20" height="30" viewBox="0 0 20 30"><path d="M1 1 V24 L6.5 18.5 L10.5 28 L14 26.5 L10 17.5 H17.5 Z" fill="#fff" stroke="#222" stroke-width="1.3" stroke-linejoin="round"/></svg>
<div class="a" style="left:0;top:965px;width:1920px;height:55px;background:#f8f8f9"></div>
<div class="a" style="left:0;top:965px;width:1920px;height:1px;background:#e8e8e8"></div>
<svg class="i" style="left:84px;top:985px" width="16" height="16"><path d="M8 0 V16 M0 8 H16" stroke="#444746" stroke-width="2.4"/></svg>
<svg class="i" style="left:140px;top:985px" width="21" height="16"><path d="M0 1.5 H21 M0 8 H21 M0 14.5 H21" stroke="#444746" stroke-width="2.4"/></svg>
<div class="a" style="left:198px;top:966px;width:136px;height:54px;background:#e1e9f7"></div>
<div class="t" style="left:216px;top:983.3px;font-size:21.5px;color:#0b57d0;font-weight:bold">Sheet1</div>
<svg class="i" style="left:303px;top:990px" width="14" height="7"><path d="M0 0 H14 L7 7 Z" fill="#0b57d0"/></svg>
<svg class="i" style="left:1781px;top:981px" width="22" height="25" viewBox="0 0 22 25"><path d="M2 0 H20 A2 2 0 0 1 22 2 V20 A2 2 0 0 1 20 22 H13.5 L11 25 L8.5 22 H2 A2 2 0 0 1 0 20 V2 A2 2 0 0 1 2 0 Z" fill="#5f6368"/><path d="M11 5 V17 M5 11 H17" stroke="#fff" stroke-width="2.6"/></svg>
<svg class="i" style="left:1872px;top:989px" width="11" height="16"><path d="M10 1 L2 8 L10 15" stroke="#444746" stroke-width="2.2" fill="none"/></svg>
<div class="a" style="left:0;top:1020px;width:1920px;height:60px;background:linear-gradient(to right,#1f1f21,#21201f 60%,#24231f)"></div>
<div class="a" style="left:600px;top:1020px;width:72px;height:60px;background:#3d3c42"></div>
<div class="a" style="left:600px;top:1077px;width:72px;height:3px;background:#8fb7e8"></div>
<svg class="i" style="left:24px;top:1038px" width="25" height="25" viewBox="0 0 25 25"><path d="M0 3.5 L10.5 2 V11.8 H0 Z M11.8 1.8 L25 0 V11.8 H11.8 Z M0 13 H10.5 V23 L0 21.5 Z M11.8 13 H25 V25 L11.8 23.2 Z" fill="#fff"/></svg>
<svg class="i" style="left:90px;top:1037px" width="34" height="34" viewBox="0 0 34 34"><circle cx="20" cy="13" r="10.5" stroke="#fff" stroke-width="3" fill="none"/><path d="M12.5 20.5 L2 31" stroke="#fff" stroke-width="3.4" stroke-linecap="round"/></svg>
<svg class="i" style="left:168px;top:1036px" width="35" height="30" viewBox="0 0 35 30"><path d="M1 2 H12 L15 5 H34 V28 H1 Z" fill="#e8b740"/><path d="M1 9 H34 V28 H1 Z" fill="#fbd15b"/><path d="M9 17 H26 V27 H9 Z" fill="#3f8edf"/><path d="M12 20 H23 V27 H12 Z" fill="#2769b8"/></svg>
<svg class="i" style="left:242px;top:1033px" width="36" height="35" viewBox="0 0 36 35"><path d="M11 8 V4 A2 2 0 0 1 13 2 H23 A2 2 0 0 1 25 4 V8" stroke="#4a8fd8" stroke-width="2" fill="none"/><rect x="1" y="7" width="34" height="27" rx="4" fill="#f5f5f5"/><rect x="11" y="13" width="6" height="6" fill="#f35325"/><rect x="19" y="13" width="6" height="6" fill="#81bc06"/><rect x="11" y="21" width="6" height="6" fill="#05a6f0"/><rect x="19" y="21" width="6" height="6" fill="#ffba08"/></svg>
<svg class="i" style="left:316px;top:1032px" width="39" height="36" viewBox="0 0 39 36"><path d="M1 14 L19.5 2 L38 14 V34 H1 Z" fill="#1f6fc4"/><path d="M1 14 H38 V34 H1 Z" fill="#2b9be8"/><path d="M1 14 L19.5 25 L38 14" fill="#59b4f0"/><path d="M1 34 L19.5 22 L38 34 Z" fill="#3aa7ee"/></svg>
<svg class="i" style="left:392px;top:1032px" width="37" height="37" viewBox="0 0 36 36"><path d="M18 18 L5.3 10.5 A15 15 0 0 1 31.6 9.5 H18 Z" fill="#e33b2e"/><circle cx="18" cy="18" r="17" fill="#e33b2e"/><path d="M18 18 L33.6 9.5 A17 17 0 0 1 18 35 Z" fill="#fbc116"/><path d="M18 18 L18 35 A17 17 0 0 1 3.3 9.5 Z" fill="#199d49"/><path d="M3.3 9.5 L18 18 L33.6 9.5 A17 17 0 0 0 3.3 9.5 Z" fill="#e33b2e"/><circle cx="18" cy="18" r="8" fill="#fff"/><circle cx="18" cy="18" r="6.2" fill="#1a73e8"/></svg>
<svg class="i" style="left:467px;top:1036px" width="37" height="28" viewBox="0 0 37 28"><rect x="0" y="0" width="37" height="28" rx="5" fill="#e30e0e"/><path d="M14 8 L24 14 L14 20 Z" fill="#fff"/></svg>
<svg class="i" style="left:542px;top:1031px" width="37" height="37" viewBox="0 0 36 36"><defs><linearGradient id="eg" x1="0" y1="0" x2="0" y2="1"><stop offset="0" stop-color="#3fc5f0"/><stop offset="0.6" stop-color="#1d86d6"/><stop offset="1" stop-color="#0d5aa8"/></linearGradient></defs><circle cx="18" cy="18" r="17" fill="url(#eg)"/><path d="M21 19 Q29 21 34.5 14 Q36 26 28 32 Q21 36 15 31 Q23 29 21 19 Z" fill="#52cc62"/><path d="M5 24 Q4 12 16 11 Q24 11 25 17 Q25 21 21 21 Q16 21 16 26 Q16 32 24 34 Q9 36 5 24 Z" fill="#0b4c98"/><path d="M14 21 Q15 15 20 16 Q23 17 21 20 Q17 19 14 21 Z" fill="#16315e"/></svg>
<svg class="i" style="left:618px;top:1032px" width="37" height="37" viewBox="0 0 36 36"><path d="M18 18 L5.3 10.5 A15 15 0 0 1 31.6 9.5 H18 Z" fill="#e33b2e"/><circle cx="18" cy="18" r="17" fill="#e33b2e"/><path d="M18 18 L33.6 9.5 A17 17 0 0 1 18 35 Z" fill="#fbc116"/><path d="M18 18 L18 35 A17 17 0 0 1 3.3 9.5 Z" fill="#199d49"/><path d="M3.3 9.5 L18 18 L33.6 9.5 A17 17 0 0 0 3.3 9.5 Z" fill="#e33b2e"/><circle cx="18" cy="18" r="8" fill="#fff"/><circle cx="18" cy="18" r="6.2" fill="#1a73e8"/></svg>
<svg class="i" style="left:636px;top:1053px" width="23" height="23" viewBox="0 0 32 32"><defs><clipPath id="avc636"><circle cx="16" cy="16" r="16"/></clipPath></defs><g clip-path="url(#avc636)"><rect width="32" height="32" fill="#1e1f22"/><rect x="8" y="0" width="8" height="14" fill="#6b6f70"/><rect x="23" y="6" width="9" height="10" fill="#2a3448"/><ellipse cx="17.5" cy="14" rx="5.5" ry="7" fill="#b89580"/><path d="M11.5 10 Q12 3.5 18 3.5 Q24 4 23.5 10 Q21 7 17.5 7.5 Q14 8 11.5 10 Z" fill="#1a1512"/><path d="M12.5 16 Q13 21 17.5 22 Q22 21 22.5 16 Q21 19 17.5 19.5 Q14 19 12.5 16 Z" fill="#4a3026"/><path d="M2 32 Q5 22 12 21 L17.5 32 Z" fill="#141418"/><path d="M33 32 Q30 22 23 21 L17.5 32 Z" fill="#1d2235"/><path d="M13 21.5 L17.5 32 L22 21.5 Q17.5 24 13 21.5 Z" fill="#e8e6d6"/></g></svg>
<svg class="i" style="left:1259px;top:1034px" width="38" height="33" viewBox="0 0 38 33"><circle cx="19" cy="16.5" r="16" fill="#f4a72a"/><path d="M2 9 H30 M0 13.5 H36 M3 18 H38 M0 22.5 H34 M5 27 H30" stroke="#f7d7a0" stroke-width="1.6"/></svg>
<div class="t" style="left:1308px;top:1042.6px;font-size:20px;color:#fff">84&deg;F&nbsp; Haze</div>
<svg class="i" style="left:1445px;top:1045px" width="19" height="10"><path d="M1 9 L9.5 1 L18 9" stroke="#e6e6e6" stroke-width="1.5" fill="none"/></svg>
<svg class="i" style="left:1479px;top:1038px" width="24" height="28" viewBox="0 0 24 28"><path d="M2 27 L9 16 Q14 4 23 1 Q22 12 12 20 Z" fill="#9b7ee8"/><path d="M2 27 L16 8" stroke="#d8c8ff" stroke-width="1.2"/></svg>
<svg class="i" style="left:1517px;top:1039px" width="20" height="23" viewBox="0 0 20 23"><rect x="1" y="5" width="12" height="12" rx="1.5" stroke="#e6e6e6" stroke-width="1.5" fill="none"/><path d="M13 8 L19 5 V17 L13 14" stroke="#e6e6e6" stroke-width="1.5" fill="none"/><path d="M3 1 Q10 -1 16 2 M3 22 Q10 24 16 21" stroke="#e6e6e6" stroke-width="1.2" fill="none"/></svg>
<svg class="i" style="left:1553px;top:1037px" width="17" height="25" viewBox="0 0 17 25"><rect x="3" y="0" width="11" height="17" rx="5.5" fill="#e6e6e6"/><path d="M1 12 Q1 20 8.5 20 Q16 20 16 12 M8.5 20 V24 M4 24 H13" stroke="#e6e6e6" stroke-width="1.5" fill="none"/></svg>
<svg class="i" style="left:1584px;top:1042px" width="28" height="22" viewBox="0 0 28 22"><rect x="1" y="2" width="21" height="13" stroke="#e6e6e6" stroke-width="1.5" fill="none"/><rect x="3" y="4" width="15" height="9" fill="#e6e6e6"/><circle cx="18" cy="12" r="6" fill="#2aa84a"/><path d="M18 9 V17 M15 12 L18 9 L21 12" stroke="#fff" stroke-width="1.3" fill="none"/><path d="M12 20 H24" stroke="#c22" stroke-width="2"/></svg>
<svg class="i" style="left:1625px;top:1039px" width="22" height="22" viewBox="0 0 22 22"><path d="M1 14 A14 14 0 0 1 15 1 M4 17 A10 10 0 0 1 17 5 M8 19 A6 6 0 0 1 19 9" stroke="#e6e6e6" stroke-width="1.6" fill="none"/><circle cx="18" cy="19" r="2" fill="#e6e6e6"/></svg>
<svg class="i" style="left:1657px;top:1041px" width="25" height="19" viewBox="0 0 25 19"><path d="M1 6 H5 L11 1 V18 L5 13 H1 Z" stroke="#e6e6e6" stroke-width="1.5" fill="none" stroke-linejoin="round"/><path d="M15 6 Q17 9.5 15 13 M18 3.5 Q21.5 9.5 18 15.5 M21 1 Q26 9.5 21 18" stroke="#e6e6e6" stroke-width="1.4" fill="none"/></svg>
<svg class="i" style="left:1695px;top:1040px" width="34" height="20" viewBox="0 0 34 20"><rect x="0.8" y="0.8" width="32.4" height="18.4" stroke="#e6e6e6" stroke-width="1.5" fill="none"/><path d="M5 6 H29 M5 10 H29 M8 14.5 H26" stroke="#e6e6e6" stroke-width="1.3" stroke-dasharray="2 1.5"/></svg>
<div class="t" style="left:1754px;top:1028.4px;font-size:19px;color:#fff">9:15 PM</div>
<div class="t" style="left:1746px;top:1054.9px;font-size:19px;color:#fff">6/13/2023</div>
<svg class="i" style="left:1857px;top:1037px" width="27" height="25" viewBox="0 0 27 25"><path d="M1 1 H24 V18 H10 L5 23 V18 H1 Z" fill="#f2f2f2"/><path d="M5 6 H20 M5 10 H20 M5 14 H14" stroke="#333" stroke-width="1.3"/><circle cx="21" cy="19" r="5" fill="#262628" stroke="#e6e6e6" stroke-width="1.2"/></svg>
<div class="a" style="left:1912px;top:1020px;width:1px;height:60px;background:#7c7c7c"></div>
</body></html>
